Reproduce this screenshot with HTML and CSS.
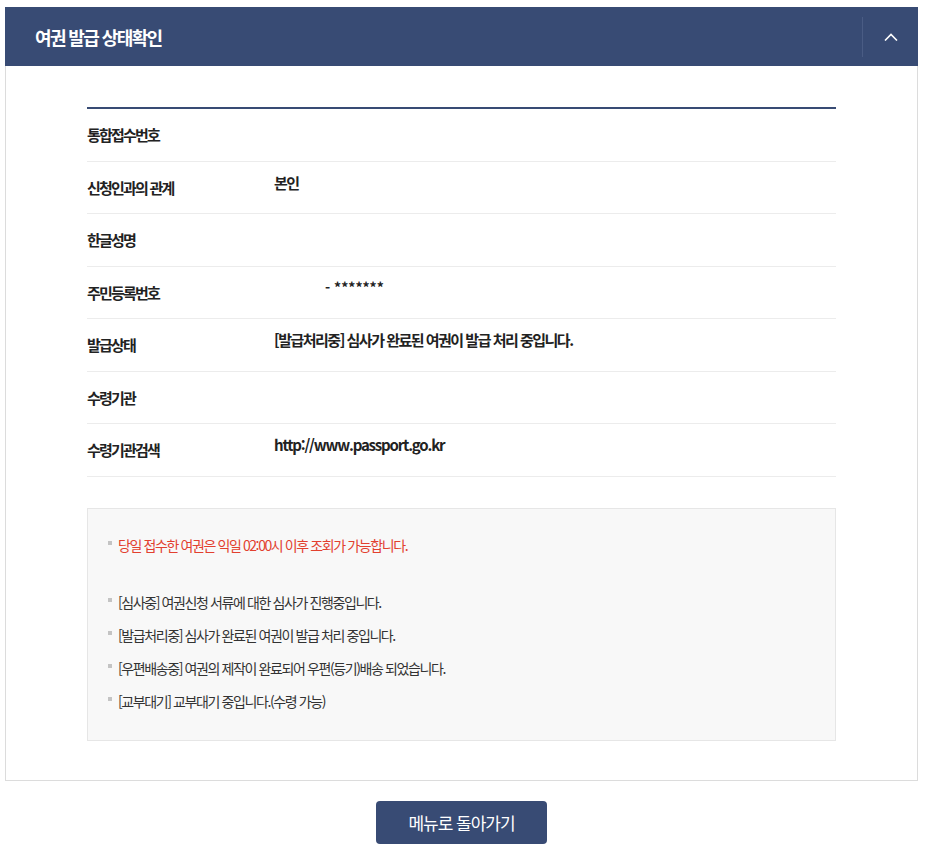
FILE: index.html
```html
<!DOCTYPE html>
<html lang="ko">
<head>
  <meta charset="utf-8">
  <meta name="viewport" content="width=device-width, initial-scale=1.0">
  <title>여권 발급 상태확인</title>
  <link rel="stylesheet" href="styles.css">
</head>
<body>

  <div class="wrapper">
    <div class="panel">
      <div class="panel-head">
        <h2 class="panel-title">여권 발급 상태확인</h2>
        <button class="toggle" type="button" aria-label="접기">
          <svg width="14" height="8" viewBox="0 0 14 8"><path d="M1 7.5 L7 1.5 L13 7.5" fill="none" stroke="#fff" stroke-width="1.6"/></svg>
        </button>
      </div>

      <div class="panel-body">
        <dl class="info-table">
          <div class="info-row">
            <dt>통합접수번호</dt>
            <dd></dd>
          </div>
          <div class="info-row">
            <dt>신청인과의 관계</dt>
            <dd>본인</dd>
          </div>
          <div class="info-row">
            <dt>한글성명</dt>
            <dd></dd>
          </div>
          <div class="info-row">
            <dt>주민등록번호</dt>
            <dd class="rrn">- *******</dd>
          </div>
          <div class="info-row">
            <dt>발급상태</dt>
            <dd>[발급처리중] 심사가 완료된 여권이 발급 처리 중입니다.</dd>
          </div>
          <div class="info-row">
            <dt>수령기관</dt>
            <dd></dd>
          </div>
          <div class="info-row">
            <dt>수령기관검색</dt>
            <dd class="link">http://www.passport.go.kr</dd>
          </div>
        </dl>

        <div class="notice-box">
          <ul class="notice-list">
            <li class="red">당일 접수한 여권은 익일 02:00시 이후 조회가 가능합니다.</li>
            <li class="gap">[심사중] 여권신청 서류에 대한 심사가 진행중입니다.</li>
            <li>[발급처리중] 심사가 완료된 여권이 발급 처리 중입니다.</li>
            <li>[우편배송중] 여권의 제작이 완료되어 우편(등기)배송 되었습니다.</li>
            <li>[교부대기] 교부대기 중입니다.(수령 가능)</li>
          </ul>
        </div>
      </div>
    </div>

    <div class="btn-area">
      <button class="btn-back" type="button">메뉴로 돌아가기</button>
    </div>
  </div>

</body>
</html>
```

FILE: styles.css
```css
body {
  margin: 0;
  padding: 0;
  background: #fff;
  font-family: "Noto Sans CJK KR", "Noto Sans", sans-serif;
  color: #222;
}

.wrapper {
  width: 913px;
  margin: 7px 0 0 5px;
}

.panel {
  border: 1px solid #dcdcdc;
  border-top: none;
}

/* 헤더 */
.panel-head {
  display: flex;
  align-items: center;
  height: 59px;
  background-color: #384b74;
  margin: 0 -1px;
}

.panel-title {
  flex: 1;
  margin: 0;
  padding-left: 30px;
  font-size: 18px;
  font-weight: 700;
  color: #fff;
  letter-spacing: -1.6px;
}

.toggle {
  display: flex;
  align-items: center;
  justify-content: center;
  width: 56px;
  height: 40px;
  padding: 0;
  background: none;
  border: none;
  border-left: 1px solid #4a5c84;
  cursor: pointer;
}

.panel-body {
  padding: 41px 81px 39px;
}

/* 조회 결과 표 */
.info-table {
  margin: 0;
  border-top: 2px solid #384b74;
}

.info-row {
  display: flex;
  align-items: center;
  height: 51.5px;
  border-bottom: 1px solid #ececec;
}

.info-row dt {
  width: 187px;
  font-size: 15px;
  font-weight: 700;
  letter-spacing: -1.8px;
  color: #222;
}

.info-row dd {
  margin: 0 0 10px;
  font-size: 15px;
  font-weight: 700;
  letter-spacing: -1.5px;
  color: #222;
}

.info-row dd.rrn {
  padding-left: 51px;
  font-size: 14px;
  letter-spacing: 0;
}

.info-row dd.link {
  letter-spacing: -1.2px;
  white-space: nowrap;
}

/* 안내 박스 */
.notice-box {
  margin-top: 31px;
  background: #f8f8f8;
  border: 1px solid #e6e6e6;
  padding: 20px 20px 22px;
}

.notice-list {
  list-style: none;
  margin: 0;
  padding: 0;
}

.notice-list li {
  position: relative;
  padding-left: 10px;
  line-height: 33px;
  font-size: 14px;
  letter-spacing: -1.4px;
  color: #333;
}

.notice-list li::before {
  content: "";
  position: absolute;
  left: 0;
  top: 12px;
  width: 4px;
  height: 4px;
  background: #c4c4c4;
}

.notice-list li.red {
  color: #e2402f;
}

.notice-list li.gap {
  margin-top: 24px;
}

/* 하단 버튼 */
.btn-area {
  display: flex;
  justify-content: center;
  margin-top: 20px;
}

.btn-back {
  width: 171px;
  height: 43px;
  font-family: inherit;
  font-size: 17px;
  letter-spacing: -1px;
  color: #fff;
  background-color: #384b74;
  border: none;
  border-radius: 4px;
  cursor: pointer;
}
```
